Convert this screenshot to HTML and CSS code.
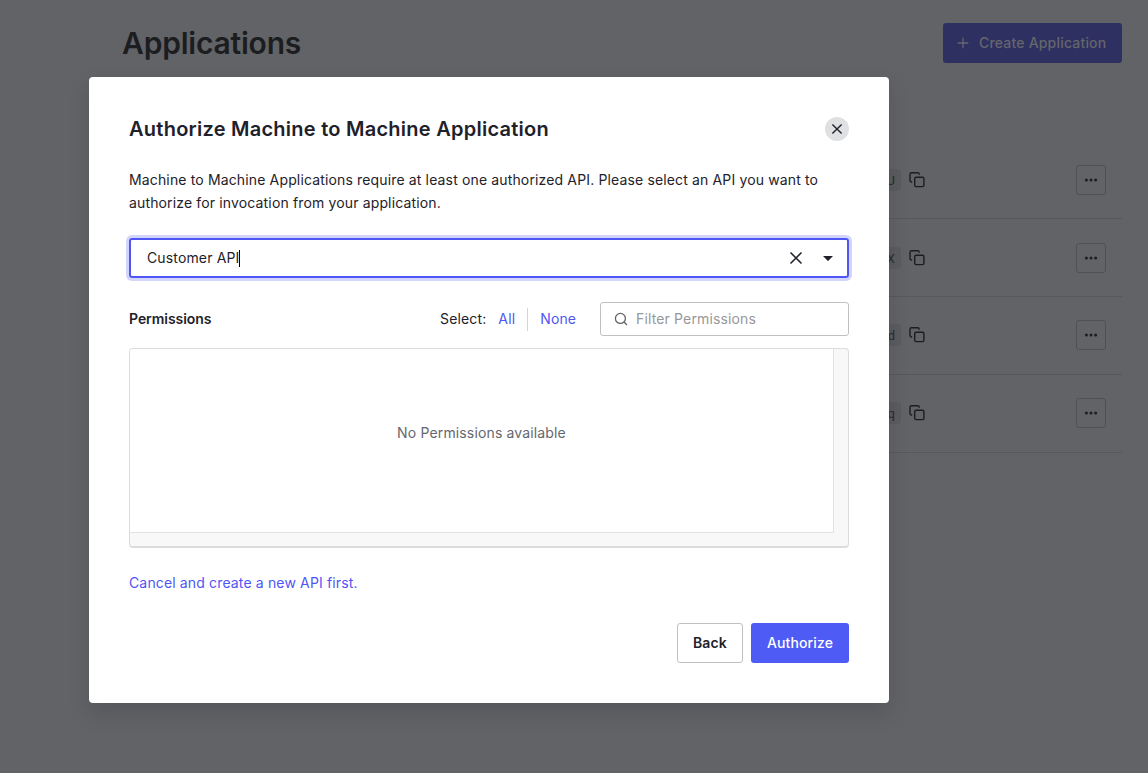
FILE: index.html
```html
<!DOCTYPE html>
<html lang="en">
<head>
<meta charset="utf-8">
<title>Applications</title>
<link rel="stylesheet" href="styles.css">
</head>
<body>
<svg width="0" height="0" class="sprite">
  <symbol id="copy" viewBox="0 0 16 16"><rect x="5.7" y="5.2" width="9.2" height="9.4" rx="1.4"/><path d="M3.2 10H2.4A1.4 1.4 0 0 1 1 8.6V2.2A1.4 1.4 0 0 1 2.4.8h6.4a1.4 1.4 0 0 1 1.4 1.4v.6"/></symbol>
  <symbol id="more" viewBox="0 0 14 4"><circle cx="2.4" cy="2" r="1.5"/><circle cx="7" cy="2" r="1.5"/><circle cx="11.6" cy="2" r="1.5"/></symbol>
</svg>
<main class="page">
  <header class="page-header">
    <h1 class="page-title">Applications</h1>
    <button class="create"><svg width="12" height="12" viewBox="0 0 12 12"><path d="M6 .7v10.6M.7 6h10.6"/></svg><span>Create Application</span></button>
  </header>
  <section class="list">
    <div class="row"><span class="chip">U</span><svg class="copy" width="16" height="16"><use href="#copy"/></svg><button class="more"><svg width="14" height="4"><use href="#more"/></svg></button></div>
    <div class="row"><span class="chip">X</span><svg class="copy" width="16" height="16"><use href="#copy"/></svg><button class="more"><svg width="14" height="4"><use href="#more"/></svg></button></div>
    <div class="row low"><span class="chip">d</span><svg class="copy" width="16" height="16"><use href="#copy"/></svg><button class="more"><svg width="14" height="4"><use href="#more"/></svg></button></div>
    <div class="row low"><span class="chip">q</span><svg class="copy" width="16" height="16"><use href="#copy"/></svg><button class="more"><svg width="14" height="4"><use href="#more"/></svg></button></div>
  </section>
</main>
<div class="modal" role="dialog">
  <div class="modal-head">
    <h2 class="modal-title">Authorize Machine to Machine Application</h2>
    <button class="close"><svg width="12" height="12" viewBox="0 0 12 12"><path d="M1.4 1.4l9.2 9.2M10.6 1.4l-9.2 9.2"/></svg></button>
  </div>
  <p class="intro">Machine to Machine Applications require at least one authorized API. Please select an API you want to<br>authorize for invocation from your application.</p>
  <div class="select">
    <span class="select-value">Customer API</span><span class="caret"></span>
    <svg class="clear" width="14" height="14" viewBox="0 0 14 14"><path d="M1.5 1.5l11 11M12.5 1.5l-11 11"/></svg>
    <svg class="arrow" width="10" height="5" viewBox="0 0 10 5"><path d="M0 0h10L5.6 4.6q-.6.6-1.2 0z"/></svg>
  </div>
  <div class="tools">
    <strong class="label">Permissions</strong>
    <span class="select-label">Select:</span>
    <a class="link all"><span>All</span></a>
    <a class="link none">None</a>
    <div class="filter"><svg width="14" height="14" viewBox="0 0 14 14"><circle cx="6.4" cy="6.4" r="5"/><path d="M10 10l3 3"/></svg><span class="placeholder">Filter Permissions</span></div>
  </div>
  <div class="permissions">
    <div class="viewport">No Permissions available</div>
  </div>
  <a class="link cancel">Cancel and create a new API first.</a>
  <div class="actions"><button class="btn">Back</button><button class="btn primary">Authorize</button></div>
</div>
</body>
</html>
```
FILE: styles.css
```css
* { box-sizing: border-box; }
body {
  margin: 0;
  height: 773px;
  overflow: hidden;
  background: #626366;
  color: #1e212a;
  font: 14px/23px Inter, "Liberation Sans", sans-serif;
  letter-spacing: 0.145px;
}
button { font: inherit; letter-spacing: inherit; padding: 0; margin: 0; }
svg { display: block; flex: none; fill: none; stroke: currentColor; }
.sprite { position: absolute; }
.page { padding: 23px 26px 0 122px; }
.page-header { display: flex; justify-content: space-between; height: 118px; }
.page-title { margin: 0; font-size: 30px; line-height: 40px; font-weight: 600; letter-spacing: -0.2px; color: #1c1d21; }
.create {
  display: flex; align-items: center; gap: 10px;
  width: 179px; height: 40px; padding-left: 14px;
  border: 0; border-radius: 3px;
  background: #2e3062; color: #65666c; font-weight: 500; letter-spacing: 0.19px;
}
.create svg { stroke-width: 1.3; }
.create span { padding-bottom: 2px; }
.row {
  display: flex; align-items: center;
  height: 78px; padding: 1px 16px 0 707px;
  border-bottom: 1px solid #57585c; color: #1c1d21;
}
.low { padding-top: 0; padding-bottom: 1px; }
.chip {
  width: 72px; height: 22px; padding-right: 6px; border-radius: 4px;
  background: #5b5c5f; color: #2b2c30;
  font: 13px/23px "Roboto", sans-serif; text-align: right; letter-spacing: 0;
}
.copy { margin-left: 8px; stroke-width: 1.4; }
.more {
  display: flex; align-items: center; justify-content: center;
  width: 30px; height: 30px; margin-left: auto;
  border: 1px solid #4f5054; border-radius: 3px; background: none; color: #1c1d21;
}
.more svg { fill: currentColor; stroke: none; }
.modal {
  position: absolute; left: 89px; top: 77px;
  display: flex; flex-direction: column;
  width: 800px; height: 626px; padding: 40px;
  border-radius: 4px; background: #fff;
  box-shadow: 0 10px 20px rgba(30, 33, 42, 0.18);
}
.modal > * { flex: none; }
.modal-head { display: flex; align-items: center; justify-content: space-between; height: 24px; }
.modal-title { margin: 0; font-size: 20px; line-height: 24px; font-weight: 600; letter-spacing: 0.25px; }
.close {
  display: flex; align-items: center; justify-content: center;
  width: 24px; height: 24px; border: 0; border-radius: 50%; background: #dfe0e2; color: #1e212a;
}
.close svg { stroke-width: 1.4; }
.intro { margin: 27px 0 24px; }
.select {
  display: flex; align-items: center;
  height: 40px; padding: 0 14px 0 16px;
  border: 2px solid #4f56f5; border-radius: 3px; box-shadow: 0 0 0 3px #d3d5fd;
}
.select-value { padding-bottom: 1px; }
.caret { width: 1px; height: 17px; background: #000; }
.clear { margin-left: auto; stroke-width: 1.5; }
.arrow { margin-left: 20px; fill: #1e212a; stroke: none; }
.tools { display: flex; align-items: center; height: 34px; margin-top: 24px; }
.label, .select-label, .all span, .none, .placeholder { padding-bottom: 1px; }
.label { width: 311px; font-weight: 600; letter-spacing: -0.05px; }
.link { color: #4f56f5; }
.all { height: 23px; line-height: 22px; margin-left: 12px; padding-right: 12px; border-right: 1px solid #d5d5d8; }
.none { margin-left: 12px; }
.filter {
  display: flex; align-items: center; gap: 8px;
  width: 249px; height: 34px; margin-left: auto; padding-left: 13px;
  border: 1px solid #bfc0c3; border-radius: 3px; color: #97989a;
}
.filter svg { color: #626369; stroke-width: 1.3; }
.permissions {
  height: 200px; margin-top: 12px; padding: 0 14px 14px 0;
  border: 1px solid #dcdcde; border-bottom-width: 2px; border-radius: 4px; background: #f8f8f8; overflow: hidden;
}
.viewport {
  display: flex; align-items: center; justify-content: center;
  height: 184px; padding-bottom: 16px;
  border-right: 1px solid #e2e2e3; border-bottom: 1px solid #e2e2e3;
  background: #fff; color: #65676e;
}
.cancel { margin-top: 23px; }
.actions { display: flex; justify-content: flex-end; gap: 8px; margin-top: 29px; }
.btn {
  width: 66px; height: 40px; padding-bottom: 1px; border: 1px solid #bfc0c3; border-radius: 3px;
  background: #fff; color: #1e212a; font-weight: 600;
}
.primary { width: 98px; padding-bottom: 2px; border: 0; background: #4f5bf5; color: #fff; font-weight: 500; }
```
